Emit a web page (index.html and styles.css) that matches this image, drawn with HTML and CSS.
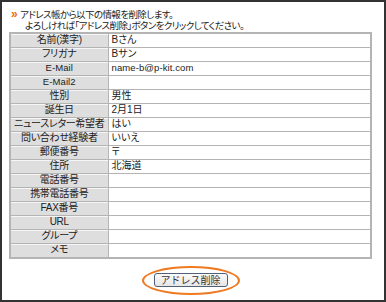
FILE: index.html
```html
<!DOCTYPE html>
<html lang="ja">
<head>
  <meta charset="UTF-8" />
  <title>アドレス削除</title>
  <link rel="stylesheet" href="styles.css">
</head>
<body>
  <div class="frame">
    <div class="notice">
      <span class="mark">»</span>
      <p>アドレス帳から以下の情報を削除します。<br>
      <span class="indent">よろしければ「アドレス削除」ボタンをクリックしてください。</span></p>
    </div>

    <table class="info">
      <tr><th>名前(漢字)</th><td>Bさん</td></tr>
      <tr><th>フリガナ</th><td>Bサン</td></tr>
      <tr><th class="latin">E-Mail</th><td class="latin">name-b@p-kit.com</td></tr>
      <tr><th class="latin">E-Mail2</th><td></td></tr>
      <tr><th>性別</th><td>男性</td></tr>
      <tr><th>誕生日</th><td>2月1日</td></tr>
      <tr><th>ニュースレター希望者</th><td>はい</td></tr>
      <tr><th>問い合わせ経験者</th><td>いいえ</td></tr>
      <tr><th>郵便番号</th><td>〒</td></tr>
      <tr><th>住所</th><td>北海道</td></tr>
      <tr><th>電話番号</th><td></td></tr>
      <tr><th>携帯電話番号</th><td></td></tr>
      <tr><th>FAX番号</th><td></td></tr>
      <tr><th>URL</th><td></td></tr>
      <tr><th>グループ</th><td></td></tr>
      <tr class="memo"><th>メモ</th><td></td></tr>
    </table>

    <div class="actions">
      <span class="button-wrap">
        <button class="btn">アドレス削除</button>
        <span class="ring"></span>
      </span>
    </div>
  </div>
</body>
</html>
```

FILE: styles.css
```css
* {
  margin: 0;
  padding: 0;
  box-sizing: border-box;
}

body {
  font-family: 'Liberation Sans', 'Noto Sans CJK JP', sans-serif;
  font-size: 10px;
  font-feature-settings: "palt";
  color: #222;
  background: #fff;
}

.frame {
  width: 386px;
  height: 302px;
  border: 2px solid #333;
  padding: 7px 12px 0 7px;
}

.notice {
  display: flex;
  gap: 3px;
  font-size: 9.5px;
  line-height: 11px;
  height: 23px;
  letter-spacing: -0.6px;
}

.mark {
  color: #f06a10;
  font-weight: bold;
  font-size: 12px;
  line-height: 11px;
  padding-left: 2px;
}

.indent {
  padding-left: 5px;
}

.info {
  width: 363px;
  border-collapse: collapse;
  border: 2px solid #b4b4b4;
}

.info th,
.info td {
  border: 1px solid #b4b4b4;
  height: 14px;
  line-height: 12px;
  font-weight: normal;
  padding: 0 3px;
  white-space: nowrap;
}

.info th {
  width: 98px;
  background: #dedede;
  text-align: center;
  letter-spacing: -0.3px;
  box-shadow: inset 0 1px 0 #f6f6f6;
}

.info .latin {
  font-size: 9.5px;
  letter-spacing: 0.1px;
}

.info .memo th,
.info .memo td {
  height: 15px;
}

.actions {
  display: flex;
  justify-content: center;
  padding: 14px 0 0 0;
}

.button-wrap {
  position: relative;
  display: inline-block;
}

.btn {
  font-family: inherit;
  font-size: 10px;
  color: #333;
  width: 74px;
  height: 14px;
  line-height: 11px;
  border: 1px solid #4f5f76;
  border-radius: 3px;
  background: linear-gradient(#fbfbfb, #e6e6e6);
}

.ring {
  position: absolute;
  left: -12px;
  top: -7px;
  width: 98px;
  height: 29px;
  border: 2px solid #f07a22;
  border-radius: 50%;
}
```
